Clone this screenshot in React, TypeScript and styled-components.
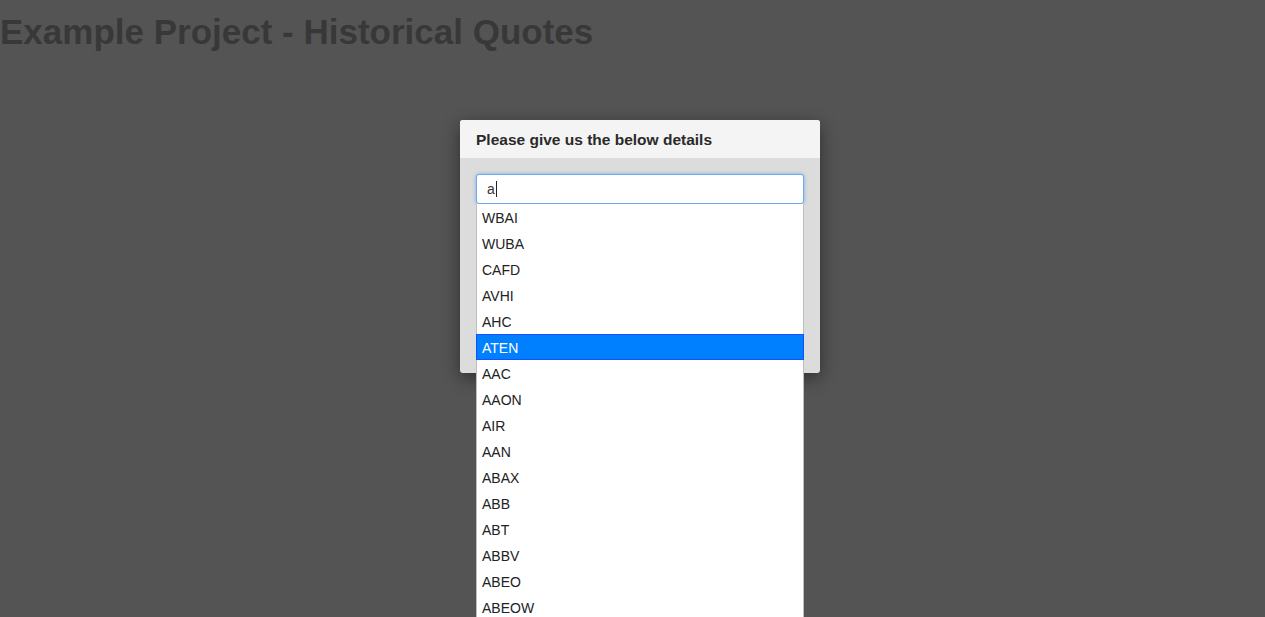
import React from "react";
import styled, { createGlobalStyle } from "styled-components";

const Global = createGlobalStyle`
  html, body { margin: 0; padding: 0; }
  body {
    background: #545454;
    font-family: "Liberation Sans", Arial, sans-serif;
    overflow: hidden;
    height: 617px;
  }
`;

const Page = styled.div`
  position: relative;
  width: 1265px;
  height: 617px;
  overflow: hidden;
`;

const Title = styled.h1`
  margin: 0;
  padding-top: 13px;
  font-size: 35px;
  font-weight: bold;
  letter-spacing: 0;
  color: #383838;
  line-height: 38px;
`;

const Modal = styled.div`
  position: absolute;
  left: 460px;
  top: 120px;
  width: 360px;
  border-radius: 3px;
  background: #dcdcdc;
  box-shadow: 0 5px 18px rgba(0, 0, 0, 0.45);
  display: flex;
  flex-direction: column;
`;

const ModalHeader = styled.div`
  box-sizing: border-box;
  height: 38px;
  background: #f4f4f4;
  border-radius: 3px 3px 0 0;
  display: flex;
  align-items: center;
  padding: 2px 16px 0;
  font-size: 15.5px;
  font-weight: bold;
  color: #2a2a2a;
`;

const ModalBody = styled.div`
  position: relative;
  padding: 16px;
  height: 183px;
`;

const Input = styled.div`
  box-sizing: border-box;
  height: 30px;
  background: #fff;
  border: 1px solid #6aa9e6;
  border-radius: 3px;
  box-shadow: 0 0 4px rgba(80, 150, 230, 0.6);
  display: flex;
  align-items: center;
  padding-left: 10px;
  font-size: 14px;
  color: #333;
`;

const Caret = styled.span`
  display: inline-block;
  width: 1px;
  height: 16px;
  background: #222;
  margin-left: 1px;
`;

const List = styled.ul`
  position: absolute;
  left: 16px;
  top: 46px;
  width: 328px;
  box-sizing: border-box;
  margin: 0;
  padding: 0;
  list-style: none;
  background: #fff;
  border: 1px solid #bdbdbd;
  border-top: none;
  z-index: 2;
`;

const Item = styled.li<{ $active?: boolean }>`
  box-sizing: border-box;
  height: 26px;
  display: flex;
  align-items: center;
  padding: 2px 0 0 5px;
  font-size: 14px;
  color: ${(p) => (p.$active ? "#fff" : "#222")};
  background: ${(p) => (p.$active ? "#0080ff" : "transparent")};
  border: 1px solid ${(p) => (p.$active ? "#1a4fff" : "transparent")};
  margin: 0 -1px;
`;

const items = [
  "WBAI",
  "WUBA",
  "CAFD",
  "AVHI",
  "AHC",
  "ATEN",
  "AAC",
  "AAON",
  "AIR",
  "AAN",
  "ABAX",
  "ABB",
  "ABT",
  "ABBV",
  "ABEO",
  "ABEOW",
];

export default function App() {
  return (
    <Page>
      <Global />
      <Title>Example Project - Historical Quotes</Title>
      <Modal>
        <ModalHeader>Please give us the below details</ModalHeader>
        <ModalBody>
          <Input>
            a<Caret />
          </Input>
          <List>
            {items.map((it) => (
              <Item key={it} $active={it === "ATEN"}>
                {it}
              </Item>
            ))}
          </List>
        </ModalBody>
      </Modal>
    </Page>
  );
}
